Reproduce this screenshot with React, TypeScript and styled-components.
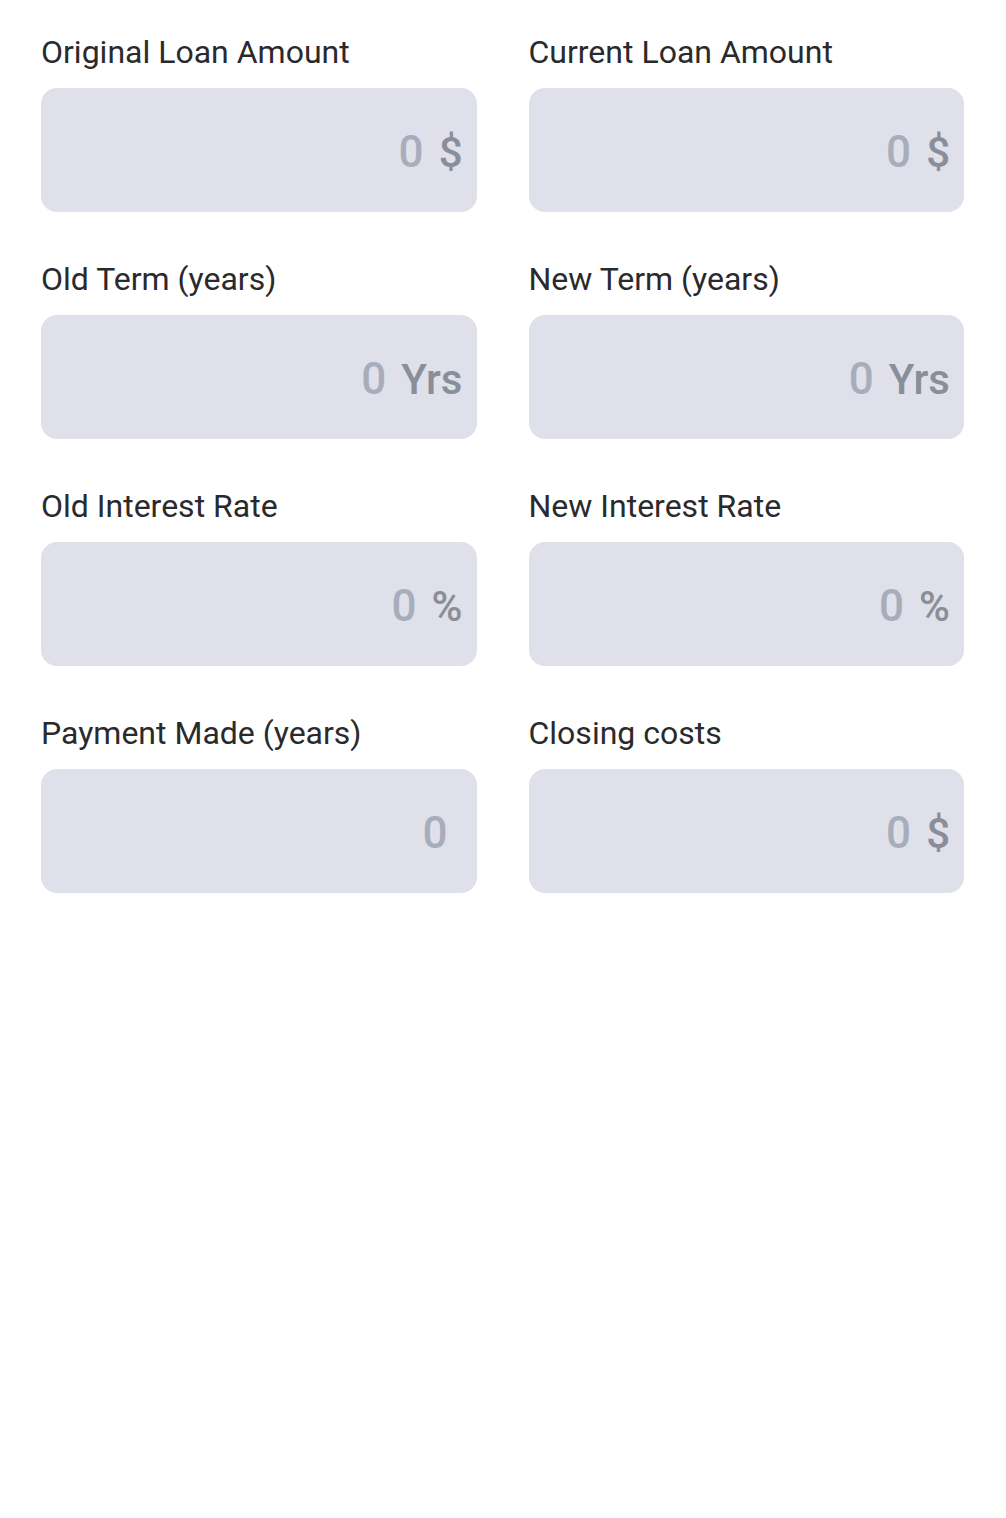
import React from "react";
import styled, { createGlobalStyle } from "styled-components";

const Global = createGlobalStyle`
  html, body { margin: 0; padding: 0; background: #ffffff; }
  body { font-family: Roboto, "Noto Sans", Arial, sans-serif; }
`;

const Page = styled.div`
  padding: 32px 42px 0 41px;
  display: grid;
  grid-template-columns: minmax(0, 1fr) minmax(0, 1fr);
  column-gap: 52px;
  row-gap: 47px;
`;

const Field = styled.div`
  display: flex;
  flex-direction: column;
  gap: 16px;
  min-width: 0;
`;

const Label = styled.label`
  font-size: 32px;
  line-height: 40px;
  color: #2a2a2d;
  font-weight: 400;
  white-space: nowrap;
`;

const Box = styled.div`
  height: 124px;
  background: #dfe0ea;
  border-radius: 16px;
  display: flex;
  align-items: center;
  padding: 4px 14px 0 20px;
  box-sizing: border-box;
`;

const Input = styled.input<{ $pad: number }>`
  flex: 1;
  width: 0;
  min-width: 0;
  border: none;
  outline: none;
  background: transparent;
  text-align: right;
  font-family: Roboto, "Noto Sans", Arial, sans-serif;
  font-size: 44px;
  font-weight: 500;
  color: #555;
  padding: 0 ${(p) => p.$pad}px 0 0;
  &::placeholder {
    color: #a8adbb;
  }
`;

const Suffix = styled.span`
  font-size: 42px;
  font-weight: 500;
  color: #8a8e99;
  margin-left: 15px;
`;

const fields = [
  { label: "Original Loan Amount", suffix: "$" },
  { label: "Current Loan Amount", suffix: "$" },
  { label: "Old Term (years)", suffix: "Yrs" },
  { label: "New Term (years)", suffix: "Yrs" },
  { label: "Old Interest Rate", suffix: "%" },
  { label: "New Interest Rate", suffix: "%" },
  { label: "Payment Made (years)", suffix: "" },
  { label: "Closing costs", suffix: "$" },
];

export default function App() {
  return (
    <>
      <Global />
      <Page>
        {fields.map((f) => (
          <Field key={f.label}>
            <Label>{f.label}</Label>
            <Box>
              <Input placeholder="0" $pad={f.suffix ? 0 : 15} />
              {f.suffix && <Suffix>{f.suffix}</Suffix>}
            </Box>
          </Field>
        ))}
      </Page>
    </>
  );
}
